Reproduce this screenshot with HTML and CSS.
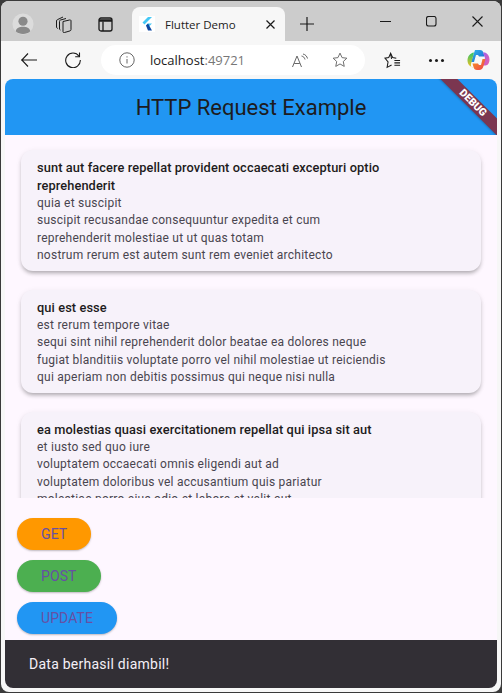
FILE: index.html
```html
<!DOCTYPE html>
<html lang="en">
<head>
    <meta charset="UTF-8">
    <title>Flutter Demo</title>
    <link rel="stylesheet" href="styles.css">
</head>
<body>
    <div class="window">
        <div class="tabbar">
            <div class="profile">
                <svg width="22" height="22" viewBox="0 0 24 24"><circle cx="12" cy="12" r="11.500" fill="#dcdcdc"/><circle cx="12" cy="9" r="5" fill="#8a8a8a"/><path d="M4 20c1-4 4-5 8-5s7 1 8 5c-2 2-5 3-8 3s-6-1-8-3z" fill="#8a8a8a"/></svg>
            </div>
            <svg class="tool-icon icon-tabs" width="17" height="17" viewBox="0 0 17 17" fill="none" stroke="#1a1a1a" stroke-width="1"><path d="M8 5.500l6.500-1.500a1 1 0 0 1 1.500 1v8.500a1.500 1.500 0 0 1-1 1.400L9.500 16.500a1 1 0 0 1-1.500-1z"/><path d="M5.500 14l-1-.7V5.500A1.500 1.500 0 0 1 5.500 4L11 2.500"/><path d="M2.800 12.500 1.500 11.500V5a1.500 1.500 0 0 1 1-1.400L8 1"/></svg>
            <svg class="tool-icon icon-pane" width="15" height="15" viewBox="0 0 15 15" fill="none" stroke="#1a1a1a" stroke-width="1.300"><rect x="1" y="1" width="13" height="13" rx="2"/><path d="M1 3.500h13" stroke-width="2.500"/><path d="M5 4.500V14"/></svg>
            <div class="tab">
                <svg class="tab-logo" width="16" height="16" viewBox="0 0 16 16"><rect width="16" height="16" fill="#fff"/><path d="M9 1h4L5.500 8.500 3.500 6.500z" fill="#44c8f5"/><path d="M9 7.500h4L9 11.500 7 9.500z" fill="#44c8f5"/><path d="M7 9.500l2-2 4 7H9z" fill="#0d47a1"/></svg>
                <span class="tab-title">Flutter Demo</span>
                <svg width="9" height="9" viewBox="0 0 9 9" stroke="#1a1a1a" stroke-width="1.200"><path d="M.5.500l8 8M8.500.500l-8 8"/></svg>
            </div>
            <svg class="new-tab" width="14" height="14" viewBox="0 0 14 14" stroke="#1a1a1a" stroke-width="1.200"><path d="M7 0v14M0 7h14"/></svg>
            <div class="window-controls">
                <svg width="11" height="11" viewBox="0 0 11 11" stroke="#1a1a1a" stroke-width="1.100"><path d="M0 5.500h11"/></svg>
                <svg width="11" height="11" viewBox="0 0 11 11" fill="none" stroke="#1a1a1a" stroke-width="1.100"><rect x=".5" y=".5" width="9.500" height="9.500" rx="2"/></svg>
                <svg width="11" height="11" viewBox="0 0 11 11" stroke="#1a1a1a" stroke-width="1.100"><path d="M.5.500l10 10M10.500.500l-10 10"/></svg>
            </div>
        </div>
        <div class="toolbar">
            <svg class="nav-back" width="16" height="14" viewBox="0 0 16 14" fill="none" stroke="#1a1a1a" stroke-width="1.100"><path d="M0 7h16M7 .5.800 7 7 13.500"/></svg>
            <svg class="nav-reload" width="16" height="16" viewBox="0 0 16 16" fill="none" stroke="#1a1a1a" stroke-width="1.100"><path d="M14 4.200A7.300 7.300 0 1 0 15.300 8"/><path d="M14.500.500v4.300h-4.300"/></svg>
            <div class="address">
                <svg width="16" height="16" viewBox="0 0 16 16" fill="none" stroke="#666"><circle cx="8" cy="8" r="7.200"/><path d="M8 7v4.500M8 4.300v1.200"/></svg>
                <span class="url">localhost<span class="port">:49721</span></span>
                <svg class="read-icon" width="16" height="15" viewBox="0 0 16 15" fill="none" stroke="#666"><path d="M.5 14 5 3l4.500 11M2.200 10.500h5.600"/><path d="M9.500 3c2 .5 3 1.500 3.500 3.500M11 1c2.500.5 4 2.500 4.500 4.500"/></svg>
                <svg class="star-icon" width="16" height="16" viewBox="0 0 17 17" fill="none" stroke="#666"><path d="M8.500 1.200l2.200 4.800 5.100.6-3.800 3.500 1 5.200-4.500-2.600L4 15.300l1-5.200L1.200 6.600l5.100-.6z"/></svg>
            </div>
            <svg class="fav-icon" width="17" height="17" viewBox="0 0 18 17" fill="none" stroke="#1a1a1a" stroke-width="1.100"><path d="M8 6.800 7 1 5 5.300 1 6l3.300 4-1 5.800L8 13.200"/><path d="M7 1l2.200 4.300 3.800.7"/><path d="M11 8.500h6M11 11h6M11 13.500h6"/></svg>
            <div class="more"><span></span><span></span><span></span></div>
            <svg class="copilot" width="23" height="22" viewBox="0 0 23 22">
                <defs>
                    <linearGradient id="cp1" x1="0" y1="0" x2="1" y2="1"><stop offset="0" stop-color="#2fb8e6"/><stop offset="1" stop-color="#1f62d6"/></linearGradient>
                    <linearGradient id="cp2" x1="0" y1="0" x2="1" y2="1"><stop offset="0" stop-color="#9a62ec"/><stop offset="1" stop-color="#ee5fa8"/></linearGradient>
                    <linearGradient id="cp3" x1="0" y1="0" x2="0" y2="1"><stop offset="0" stop-color="#2fc46a"/><stop offset="1" stop-color="#f8c21e"/></linearGradient>
                    <linearGradient id="cp4" x1="0" y1="0" x2="1" y2="1"><stop offset="0" stop-color="#f79a1e"/><stop offset="1" stop-color="#ee3f4f"/></linearGradient>
                </defs>
                <path d="M8 1h5c2 0 3 1 3.500 3l1 3.500H12l-1-1.500H9L7 13H4z" fill="url(#cp1)"/>
                <path d="M16 3.500h2c2.500 1 4.500 3.500 4.500 7 0 3-1.500 6-4 6h-3L18 9z" fill="url(#cp2)"/>
                <path d="M7 3.500 4 15c-.5 2 .5 3.500 2 3.500h2C4 18.500.500 16 .500 11.500.500 7.500 3 4 7 3.500z" fill="url(#cp3)"/>
                <path d="M5.500 14.500H11l1 1.500h2l1.500-6h3l-2 7c-.7 2.500-2 4-4.500 4H10c-2 0-3-1-3.500-3z" fill="url(#cp4)"/>
            </svg>
        </div>
        <div class="app">
            <header class="appbar">
                <h1>HTTP Request Example</h1>
                <div class="debug-banner"><span>DEBUG</span></div>
            </header>
            <main class="posts">
                <article class="post">
                    <h2>sunt aut facere repellat provident occaecati excepturi optio reprehenderit</h2>
                    <p>quia et suscipit<br>suscipit recusandae consequuntur expedita et cum<br>reprehenderit molestiae ut ut quas totam<br>nostrum rerum est autem sunt rem eveniet architecto</p>
                </article>
                <article class="post">
                    <h2>qui est esse</h2>
                    <p>est rerum tempore vitae<br>sequi sint nihil reprehenderit dolor beatae ea dolores neque<br>fugiat blanditiis voluptate porro vel nihil molestiae ut reiciendis<br>qui aperiam non debitis possimus qui neque nisi nulla</p>
                </article>
                <article class="post">
                    <h2>ea molestias quasi exercitationem repellat qui ipsa sit aut</h2>
                    <p>et iusto sed quo iure<br>voluptatem occaecati omnis eligendi aut ad<br>voluptatem doloribus vel accusantium quis pariatur<br>molestiae porro eius odio et labore et velit aut</p>
                </article>
            </main>
            <div class="actions">
                <button class="btn btn-get">GET</button>
                <button class="btn btn-post">POST</button>
                <button class="btn btn-update">UPDATE</button>
            </div>
            <div class="snackbar">Data berhasil diambil!</div>
        </div>
    </div>
</body>
</html>
```

FILE: styles.css
```css
* {
    box-sizing: border-box;
}
html, body {
    height: 100%;
}
body {
    margin: 0;
    background-color: #3a3a3a;
    font-family: Roboto, "Liberation Sans", sans-serif;
    overflow: hidden;
}
.window {
    height: 691px;
    margin: 1px 1px 0 1px;
    background-color: #f7f7f7;
    border-radius: 8px;
    display: flex;
    flex-direction: column;
    overflow: hidden;
}
.tabbar {
    height: 40px;
    flex-shrink: 0;
    background-color: #cccccc;
    display: flex;
    align-items: center;
    padding: 6px 0 0 11px;
}
.profile {
    width: 22px;
    height: 22px;
    margin-right: 21px;
}
.profile svg {
    display: block;
}
.icon-tabs {
    margin-right: 26px;
}
.icon-pane {
    margin-right: 19px;
}
.tab {
    width: 153px;
    height: 34px;
    background-color: #f7f7f7;
    border-radius: 8px 8px 0 0;
    display: flex;
    align-items: center;
    padding: 0 10px 0 7px;
}
.tab-logo {
    margin-right: 10px;
}
.tab-title {
    font-family: "Open Sans", sans-serif;
    font-size: 11.500px;
    color: #222;
    flex: 1;
}
.new-tab {
    margin-left: 15px;
}
.window-controls {
    margin-left: auto;
    display: flex;
    gap: 35px;
    padding: 0 18px 5px 0;
}
.toolbar {
    height: 38px;
    flex-shrink: 0;
    display: flex;
    align-items: center;
    padding: 0 0 0 20px;
}
.nav-reload {
    margin-left: 28px;
}
.address {
    width: 264px;
    height: 30px;
    margin-left: 20px;
    background-color: #fff;
    border-radius: 15px;
    display: flex;
    align-items: center;
    padding: 0 17px 0 18px;
}
.url {
    font-family: "Open Sans", sans-serif;
    font-size: 13px;
    color: #1a1a1a;
    margin-left: 15px;
    flex: 1;
}
.port {
    color: #777;
}
.star-icon {
    margin-left: 24px;
}
.fav-icon {
    margin-left: 19px;
}
.more {
    display: flex;
    gap: 3px;
    margin-left: 28px;
}
.more span {
    width: 3px;
    height: 3px;
    border-radius: 50%;
    background-color: #1a1a1a;
}
.copilot {
    margin-left: 23px;
}
.app {
    flex: 1;
    min-height: 0;
    margin: 0 4px 4px 4px;
    background-color: #fef7ff;
    border-radius: 8px;
    display: flex;
    flex-direction: column;
    overflow: hidden;
}
.appbar {
    position: relative;
    height: 56px;
    flex-shrink: 0;
    background-color: #2196f3;
    display: flex;
    align-items: center;
    justify-content: center;
    overflow: hidden;
}
.appbar h1 {
    margin: 0;
    font-size: 22px;
    font-weight: 400;
    color: #1d1b20;
}
.debug-banner {
    position: absolute;
    top: 18px;
    right: -21px;
    width: 90px;
    height: 11.500px;
    background-color: #7b3650;
    box-shadow: 0 1px 2px rgba(0, 0, 0, 0.2);
    transform: rotate(45deg);
    display: flex;
    align-items: center;
    justify-content: center;
}
.debug-banner span {
    font-size: 10.500px;
    font-weight: 900;
    color: #fff;
}
.posts {
    height: 363px;
    flex-shrink: 0;
    overflow: hidden;
    padding: 15px 16px 0 16px;
    display: flex;
    flex-direction: column;
    gap: 18.700px;
}
.post {
    flex-shrink: 0;
    background-color: #f7f2fa;
    border-radius: 12px;
    box-shadow: 0 3px 4px -1px rgba(0, 0, 0, 0.3), 0 1px 6px rgba(0, 0, 0, 0.06);
    padding: 9px 24px 7px 16px;
}
.post h2 {
    margin: 0;
    font-size: 12.800px;
    font-weight: 500;
    line-height: 18px;
    letter-spacing: 0.1px;
    color: #1d1b20;
}
.post p {
    margin: 0;
    font-size: 12px;
    line-height: 17.330px;
    letter-spacing: 0.24px;
    color: #49454f;
}
.actions {
    flex: 1;
    min-height: 0;
    padding: 20px 0 0 12px;
    display: flex;
    flex-direction: column;
    align-items: flex-start;
    gap: 10px;
}
.btn {
    height: 32px;
    border: none;
    border-radius: 16px;
    padding: 0 24px;
    font-family: Roboto, sans-serif;
    font-size: 14px;
    letter-spacing: 0.1px;
    color: #6750a4;
    box-shadow: 0 1px 2px rgba(0, 0, 0, 0.25);
}
.btn-get {
    background-color: #ff9800;
}
.btn-post {
    background-color: #4caf50;
}
.btn-update {
    background-color: #2196f3;
}
.snackbar {
    height: 48px;
    flex-shrink: 0;
    background-color: #322f35;
    color: #f5eff7;
    font-size: 14px;
    letter-spacing: 0.25px;
    padding: 0 24px;
    display: flex;
    align-items: center;
}
```
